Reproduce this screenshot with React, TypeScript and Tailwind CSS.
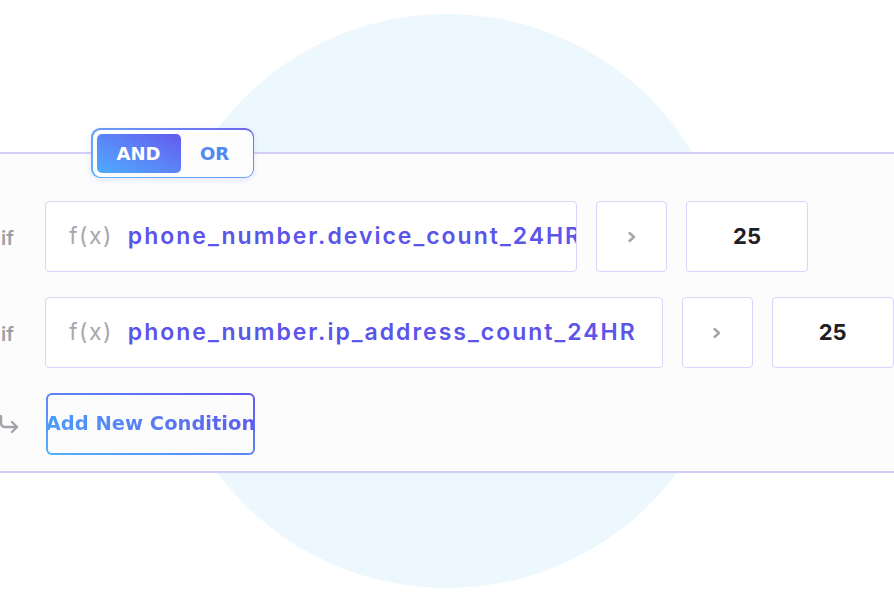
import { CornerDownRight } from 'lucide-react';

function Field({ text, clip }: { text: string; clip?: boolean }) {
    return (
        <div
            className={`h-[71px] shrink-0 rounded-[4px] border-[1.5px] border-[#d8d5fb] bg-white flex items-center gap-[15px] pl-[23px] overflow-hidden whitespace-nowrap ${clip ? 'w-[532px]' : 'pr-[25px]'}`}
        >
            <span className="text-[23px] text-[#a7a8ad] font-normal tracking-[1.5px]">f(x)</span>
            <span className="text-[23px] font-semibold text-[#5b55ea] tracking-[2px]">{text}</span>
        </div>
    );
}

function Operator() {
    return (
        <div className="ml-[19px] w-[71px] h-[71px] shrink-0 rounded-[4px] border-[1.5px] border-[#d8d5fb] bg-white flex items-center justify-center">
            <svg width="10" height="12" viewBox="0 0 10 12" fill="none">
                <path d="M2.5 2 L7 6 L2.5 10" stroke="#a4a5aa" strokeWidth="2.4" strokeLinecap="round" strokeLinejoin="round" />
            </svg>
        </div>
    );
}

function Value({ value }: { value: string }) {
    return (
        <div className="ml-[19px] w-[122px] h-[71px] shrink-0 rounded-[4px] border-[1.5px] border-[#d8d5fb] bg-white flex items-center justify-center">
            <span className="text-[22px] font-bold text-[#1e2026]">{value}</span>
        </div>
    );
}

function ConditionRow({ text, clip }: { text: string; clip?: boolean }) {
    return (
        <div className="flex items-center">
            <div className="w-[45px] shrink-0 pl-[1px] pt-[2px] text-[20px] font-semibold text-[#9fa0a5]">if</div>
            <Field text={text} clip={clip} />
            <Operator />
            <Value value="25" />
        </div>
    );
}

export default function App() {
    return (
        <div
            className="relative w-[894px] h-[600px] overflow-hidden bg-white"
            style={{ fontFamily: 'Inter, "Noto Sans", sans-serif' }}
        >
            <div className="absolute left-[160px] top-[14px] w-[574px] h-[574px] rounded-full bg-[#edf7fe]" />

            <div className="relative pt-[152px]">
                <div className="relative w-[1000px] border-y-2 border-[#d3cef8] bg-[#fcfcfd] pt-[47px] pb-[16px]">
                    {/* AND / OR toggle */}
                    <div className="absolute left-[91px] top-[-26px] rounded-[9px] p-[1.5px] bg-gradient-to-tr from-[#5fb2fb] via-[#6a9cf5] to-[#6d63f0] shadow-[0_2px_6px_rgba(80,120,240,0.15)]">
                        <div className="flex items-center h-[47px] w-[160px] rounded-[8px] bg-[#fdfdfe] p-[4px]">
                            <div className="h-full w-[84px] rounded-[5px] bg-gradient-to-tr from-[#4cabfd] to-[#6259ef] flex items-center justify-center">
                                <span className="text-[18px] font-bold text-white" style={{ fontFamily: '"DejaVu Sans", sans-serif' }}>AND</span>
                            </div>
                            <div className="flex-1 flex items-center justify-center">
                                <span className="text-[18px] font-bold text-[#4f88f1]" style={{ fontFamily: '"DejaVu Sans", sans-serif' }}>OR</span>
                            </div>
                        </div>
                    </div>

                    <div className="flex flex-col gap-[25px]">
                        <ConditionRow text="phone_number.device_count_24HR" clip />
                        <ConditionRow text="phone_number.ip_address_count_24HR" />

                        <div className="flex items-center">
                            <div className="w-[46px] shrink-0 flex items-center">
                                <CornerDownRight className="w-[24px] h-[24px] text-[#a3a4a9] -ml-[3px]" strokeWidth={2.4} />
                            </div>
                            <div className="h-[62px] w-[209px] rounded-[6px] p-[2px] bg-gradient-to-tr from-[#4fb0fd] to-[#6255ef]">
                                <div className="h-full w-full rounded-[4px] bg-[#fcfcfd] flex items-center justify-center">
                                    <span
                                        className="whitespace-nowrap text-[19.5px] font-bold bg-gradient-to-r from-[#4c9cf8] to-[#5d5cee] bg-clip-text text-transparent"
                                        style={{ fontFamily: '"DejaVu Sans", sans-serif' }}
                                    >
                                        Add New Condition
                                    </span>
                                </div>
                            </div>
                        </div>
                    </div>
                </div>
            </div>
        </div>
    );
}
